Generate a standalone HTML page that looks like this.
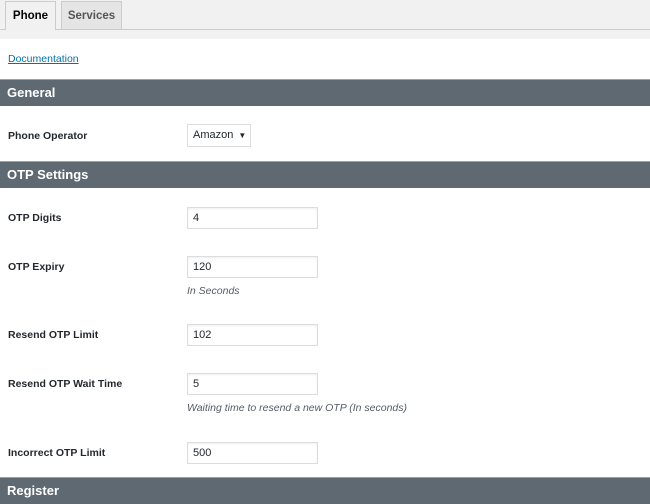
<!DOCTYPE html>
<html><head><style>
body{margin:0;width:650px;height:504px;overflow:hidden;background:#fff;font-family:"Liberation Sans",sans-serif;font-size:11px;color:#23282d;position:relative}
.top{position:absolute;left:0;top:0;width:650px;height:39px;background:#f1f1f1}
.line{position:absolute;left:0;top:29px;width:650px;height:1px;background:#ccc}
.tab{position:absolute;top:1px;height:28px;border:1px solid #ccc;border-bottom:none;font-weight:bold;font-size:11.5px;line-height:28px;text-align:center;box-sizing:border-box}
.a{position:absolute}
.hdr{position:absolute;left:0;width:650px;height:27px;background:#5f6972;border-top:1px solid #9aa1a7;box-sizing:border-box;color:#fff;font-weight:bold;font-size:13px;line-height:26px;padding-left:7px}
.lbl{position:absolute;left:8px;font-weight:bold;font-size:10.5px}
.in{position:absolute;left:187px;width:131px;height:22px;border:1px solid #ddd;box-sizing:border-box;box-shadow:inset 0 1px 2px rgba(0,0,0,.07);font-size:11px;line-height:20px;padding-left:5px}
.note{position:absolute;left:187px;font-style:italic;color:#555d66;font-size:10.5px}
</style></head><body>
<div class="top"></div><div class="line"></div>
<div class="tab" style="left:5px;width:51px;background:#f1f1f1;height:29px;color:#000">Phone</div>
<div class="tab" style="left:61px;width:61px;background:#e5e5e5;color:#555">Services</div>
<div class="a" style="left:8px;top:53px;color:#0073aa;text-decoration:underline;font-size:10.5px">Documentation</div>
<div class="hdr" style="top:79px">General</div>
<div class="lbl" style="top:130px">Phone Operator</div>
<div class="a" style="left:187px;top:124px;width:64px;height:23px;border:1px solid #ddd;box-sizing:border-box;line-height:21px;padding-left:5px;font-size:11px">Amazon <span style="font-size:8px;margin-left:2px">▼</span></div>
<div class="hdr" style="top:161px">OTP Settings</div>
<div class="lbl" style="top:212px">OTP Digits</div><div class="in" style="top:207px">4</div>
<div class="lbl" style="top:261px">OTP Expiry</div><div class="in" style="top:256px">120</div>
<div class="note" style="top:285px">In Seconds</div>
<div class="lbl" style="top:329px">Resend OTP Limit</div><div class="in" style="top:324px">102</div>
<div class="lbl" style="top:378px">Resend OTP Wait Time</div><div class="in" style="top:373px">5</div>
<div class="note" style="top:402px">Waiting time to resend a new OTP (In seconds)</div>
<div class="lbl" style="top:447px">Incorrect OTP Limit</div><div class="in" style="top:442px">500</div>
<div class="hdr" style="top:477px">Register</div>
</body></html>
